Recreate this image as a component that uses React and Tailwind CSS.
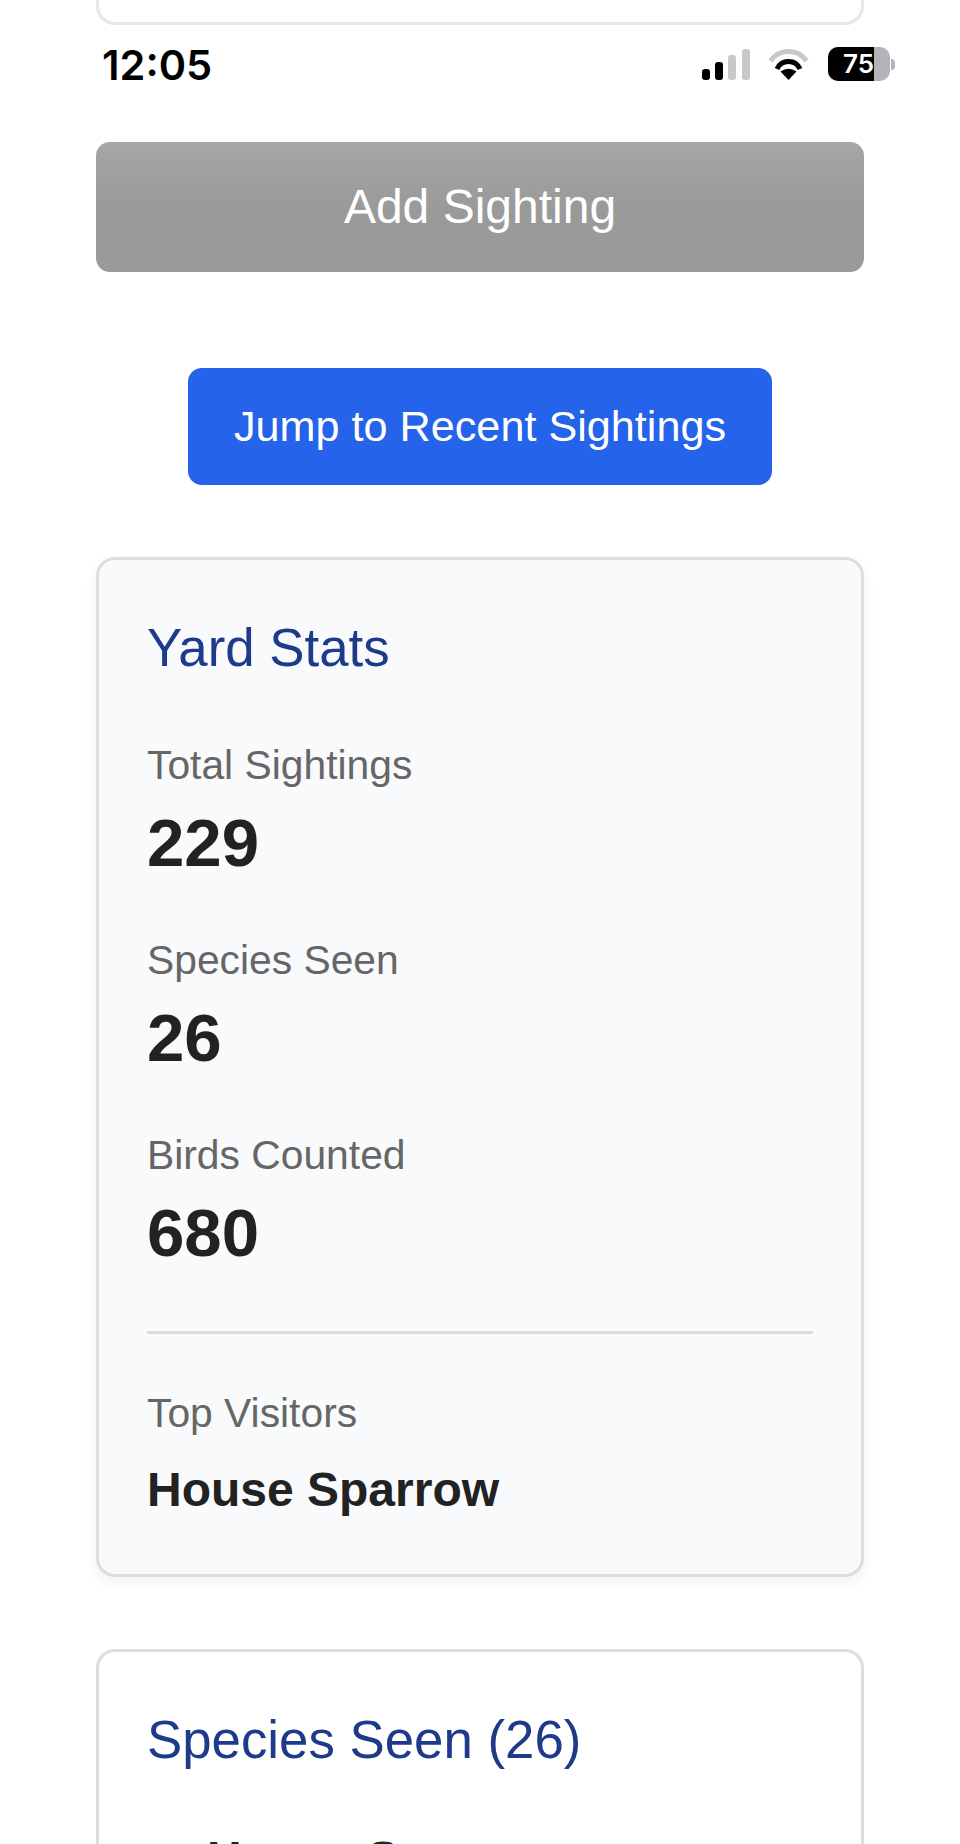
const font = { fontFamily: '"Liberation Sans", Arial, sans-serif' };

function StatusIcons() {
  return (
    <div className="-mt-[4px] flex h-[34px] items-center">
      <svg width="48" height="31" viewBox="0 0 48 31" className="mr-[18px]">
        <rect x="0" y="20" width="8" height="11" rx="3" fill="#000" />
        <rect x="13" y="13" width="8" height="18" rx="3" fill="#000" />
        <rect x="26" y="6" width="8" height="25" rx="3" fill="#c8c8cc" />
        <rect x="40" y="0" width="8" height="31" rx="3" fill="#c8c8cc" />
      </svg>
      <svg width="41" height="31" viewBox="0 0 41 31" className="mr-[19px]">
        <path d="M2.5 12 A21.8 21.8 0 0 1 38.5 12" fill="none" stroke="#c8c8cc" strokeWidth="5" />
        <path d="M9 20 A12.5 12.5 0 0 1 32 20" fill="none" stroke="#000" strokeWidth="5" />
        <path d="M20.5 31 L12.5 22.5 Q20.5 17 28.5 22.5 Z" fill="#000" />
      </svg>
      <div className="flex h-[34px] w-[62px] overflow-hidden rounded-[10px] bg-[#b4b4b8]">
        <div className="flex h-full w-[46px] items-center justify-end bg-black">
          <span className="text-[26px] leading-none font-semibold text-white" style={{ fontFamily: 'Inter, sans-serif' }}>75</span>
        </div>
      </div>
      <div className="ml-[1px] h-[11px] w-[4px] rounded-r-full bg-[#b4b4b8]" />
    </div>
  );
}

function Stat({ label, value }) {
  return (
    <div className="mb-[49px]">
      <div className="text-[40.8px] leading-[61px] text-[#666]">{label}</div>
      <div className="mt-[8px] text-[67.2px] leading-[77px] font-bold text-[#222]">{value}</div>
    </div>
  );
}

export default function App() {
  return (
    <div className="h-[1844px] w-[960px] overflow-hidden bg-white px-[96px]" style={font}>
      {/* card scrolled off the top, only its bottom edge shows */}
      <div className="-mt-[40px] h-[65px] rounded-[19px] border-[3px] border-[#e5e7eb] bg-white" />

      <div className="mt-[11px] -mr-[31px] flex h-[60px] items-center justify-between pl-[6px]">
        <span className="text-[41.5px] leading-none font-semibold text-black" style={{ fontFamily: 'Inter, sans-serif' }}>12:05</span>
        <StatusIcons />
      </div>

      <button className="mt-[46px] flex h-[130px] w-full items-center justify-center rounded-[14px] bg-gradient-to-b from-[#a5a6a5] to-[#9a9a9a] to-50% text-[48px] text-white">
        Add Sighting
      </button>

      <div className="mt-[96px] flex justify-center">
        <button className="flex h-[117px] w-[584px] items-center justify-center rounded-[14px] bg-[#2563eb] text-[43.2px] text-white">
          Jump to Recent Sightings
        </button>
      </div>

      <section className="mt-[72px] rounded-[19px] border-[3px] border-[#ddd] bg-[#f9fafb] px-[48px] pt-[48px] pb-[48px] shadow-[0_5px_14px_rgba(0,0,0,0.06)]">
        <h2 className="mb-[48px] text-[52.8px] leading-[79px] text-[#1e3a8a]">Yard Stats</h2>
        <Stat label="Total Sightings" value="229" />
        <Stat label="Species Seen" value="26" />
        <Stat label="Birds Counted" value="680" />
        <div className="mt-[60px] border-t-[3px] border-[#ddd] pt-[49px]">
          <div className="text-[40.8px] leading-[61px] text-[#666]">Top Visitors</div>
          <div className="mt-[10px] text-[48px] leading-[72px] font-bold text-[#222]">House Sparrow</div>
        </div>
      </section>

      <section className="mt-[72px] rounded-[19px] border-[3px] border-[#ddd] bg-white px-[48px] pt-[48px] pb-[96px]">
        <h2 className="mb-[44px] text-[52.8px] leading-[79px] text-[#1e3a8a]">Species Seen (26)</h2>
        <div className="pl-[60px] text-[48px] leading-[72px] font-bold text-[#222]">House Sparrow</div>
      </section>
    </div>
  );
}
